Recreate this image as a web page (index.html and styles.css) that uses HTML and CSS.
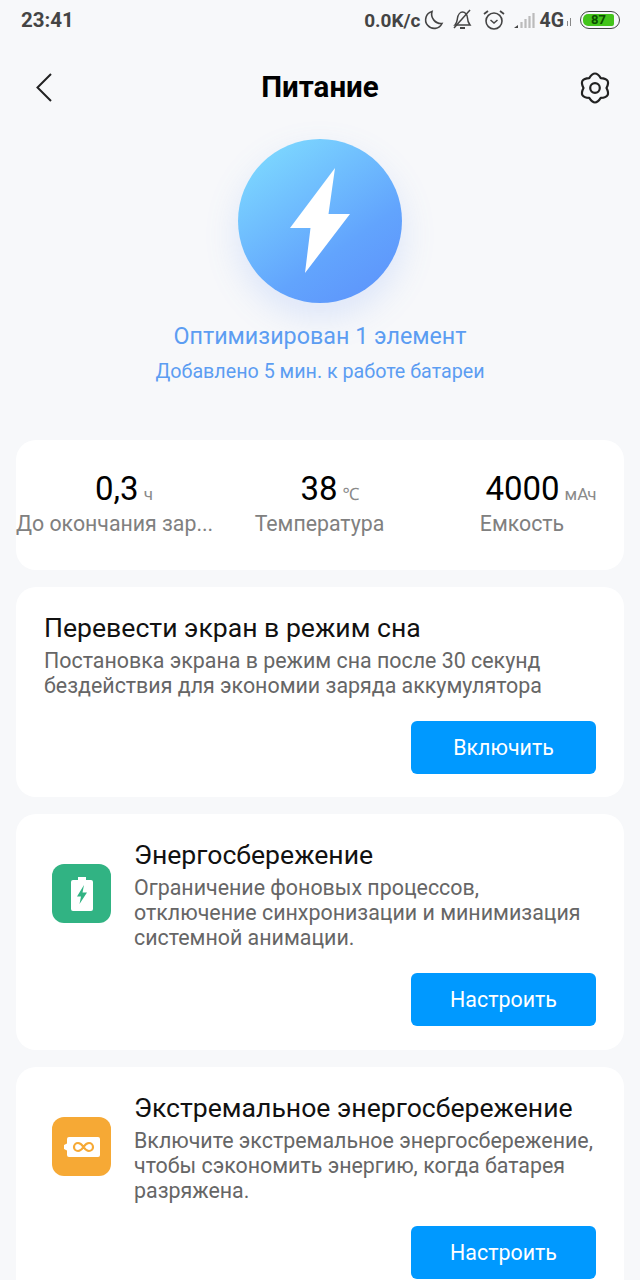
FILE: index.html
```html
<!DOCTYPE html>
<html lang="ru">
<head>
<meta charset="utf-8">
<title>Питание</title>
<link rel="stylesheet" href="styles.css">
</head>
<body>
<div class="page">
  <div class="status">
    <span class="clock">23:41</span>
    <div class="status-right">
      <span class="speed">0.0K/с</span>
      <svg class="si moon" width="22" height="22" viewBox="0 0 22 22"><path d="M10 2.500A8.600 8.600 0 1 0 20 14.500 9.500 9.500 0 0 1 10 2.500Z" fill="none" stroke="#444" stroke-width="1.600"/></svg>
      <svg class="si bell" width="22" height="24" viewBox="0 0 22 24"><path d="M4 17c2-2 2-4 2.500-7S9 4 11.500 4s5 2.500 5 6 1 5 2.500 7H4Z" fill="none" stroke="#444" stroke-width="1.500"/><path d="M9 20h5" stroke="#444" stroke-width="2"/><path d="M3 20 19 2" stroke="#444" stroke-width="1.500"/></svg>
      <svg class="si alarm" width="24" height="24" viewBox="0 0 24 24"><circle cx="12" cy="13" r="8" fill="none" stroke="#444" stroke-width="1.600"/><path d="M8.500 12l3.500 3 3.500-3" fill="none" stroke="#444" stroke-width="1.500"/><path d="M2 6l4-3M22 6l-4-3" stroke="#444" stroke-width="1.800"/></svg>
      <svg class="si signal" width="26" height="20" viewBox="0 0 26 20"><path d="M1 18l4-3v3Z" fill="#444"/><path d="M8.500 18v-6M12.500 18V9M16.500 18V6M20.500 18V3" stroke="#bbb" stroke-width="2.200"/></svg>
      <span class="net">4G</span>
      <svg class="si arrows" width="6" height="10" viewBox="0 0 6 10"><path d="M1.500 9V4M4.500 9V1" stroke="#888" stroke-width="1"/></svg>
      <span class="battery"><span class="battery-fill">87</span></span>
    </div>
  </div>

  <header class="topbar">
    <svg class="back" width="20" height="32" viewBox="0 0 20 32"><path d="M16 2 2.500 15.500 16 29" fill="none" stroke="#222" stroke-width="2"/></svg>
    <h1 class="title">Питание</h1>
    <svg class="gear" width="32" height="32" viewBox="0 0 32 32"><path d="M10.250 6.040Q16-3 21.750 6.040 32.450 6.500 27.500 16 32.450 25.500 21.750 25.960 16 35 10.250 25.960-.45 25.500 4.500 16-.45 6.500 10.250 6.040Z" fill="none" stroke="#222" stroke-width="2.200" stroke-linejoin="round"/><circle cx="16" cy="16" r="4.800" fill="none" stroke="#222" stroke-width="2.200"/></svg>
  </header>

  <section class="hero">
    <div class="orb">
      <svg width="60" height="106" viewBox="0 0 60 106"><path d="M45 0 0 60h20.500L15 105 60 46H38.500Z" fill="#fff"/></svg>
    </div>
    <p class="hero-main">Оптимизирован 1 элемент</p>
    <p class="hero-sub">Добавлено 5 мин. к работе батареи</p>
  </section>

  <section class="card stats">
    <div class="stat">
      <div class="stat-value"><span class="num">0,3</span><span class="unit">ч</span></div>
      <div class="stat-label">До окончания зар...</div>
    </div>
    <div class="stat">
      <div class="stat-value"><span class="num">38</span><span class="unit">℃</span></div>
      <div class="stat-label">Температура</div>
    </div>
    <div class="stat">
      <div class="stat-value"><span class="num">4000</span><span class="unit">мАч</span></div>
      <div class="stat-label">Емкость</div>
    </div>
  </section>

  <section class="card feature first">
    <div class="feature-text">
      <h2 class="feature-title">Перевести экран в режим сна</h2>
      <p class="feature-desc">Постановка экрана в режим сна после 30 секунд бездействия для экономии заряда аккумулятора</p>
    </div>
    <div class="actions"><button class="btn">Включить</button></div>
  </section>

  <section class="card feature with-icon">
    <div class="feature-row">
      <div class="app-icon green">
        <svg width="22" height="34" viewBox="0 0 22 34"><path d="M7 0h8v3h5a2 2 0 0 1 2 2v27a2 2 0 0 1-2 2H2a2 2 0 0 1-2-2V5a2 2 0 0 1 2-2h5Z" fill="#fff"/><path d="M13 8 6 19.500h4L8.500 27 16 15.500h-4.500Z" fill="#31b383"/></svg>
      </div>
      <div class="feature-text">
        <h2 class="feature-title">Энергосбережение</h2>
        <p class="feature-desc">Ограничение фоновых процессов, отключение синхронизации и минимизация системной анимации.</p>
      </div>
    </div>
    <div class="actions"><button class="btn">Настроить</button></div>
  </section>

  <section class="card feature with-icon">
    <div class="feature-row">
      <div class="app-icon orange">
        <svg width="36" height="20" viewBox="0 0 36 20"><path d="M5 0h29a2 2 0 0 1 2 2v16a2 2 0 0 1-2 2H5a2 2 0 0 1-2-2v-4.500L0 12V8l3-1.500V2a2 2 0 0 1 2-2Z" fill="#fff"/><path d="M19.500 10c-2-3-3.500-4-5.500-4a4 4 0 0 0 0 8c2 0 3.500-1 5.500-4s3.500-4 5.500-4a4 4 0 0 1 0 8c-2 0-3.500-1-5.500-4Z" fill="none" stroke="#f6a935" stroke-width="2.200"/></svg>
      </div>
      <div class="feature-text">
        <h2 class="feature-title">Экстремальное энергосбережение</h2>
        <p class="feature-desc">Включите экстремальное энергосбережение, чтобы сэкономить энергию, когда батарея разряжена.</p>
      </div>
    </div>
    <div class="actions"><button class="btn">Настроить</button></div>
  </section>
</div>
</body>
</html>
```
FILE: styles.css
```css
* { box-sizing: border-box; }
html, body { margin: 0; padding: 0; }
body {
  width: 640px;
  height: 1280px;
  overflow: hidden;
  background: #f7f8fa;
  font-family: Roboto, "Noto Sans", sans-serif;
}
.page { padding: 0 16px; }

.status {
  height: 40px;
  margin: 0 -16px;
  padding: 0 20px 0 21px;
  display: flex;
  align-items: center;
  justify-content: space-between;
  color: #444;
  font-weight: 700;
}
.clock { font-size: 20.500px; }
.status-right { display: flex; align-items: center; }
.speed { font-size: 19px; margin-right: 1px; }
.si { display: block; flex: none; }
.moon { margin-right: 7px; }
.bell { margin-right: 9px; }
.alarm { margin-right: 7px; }
.signal { margin-right: 1px; }
.net { font-size: 19.500px; }
.arrows { margin: 4px 8px 0 2px; }
.battery {
  display: block;
  width: 40px;
  height: 18px;
  padding: 2px;
  border: 1.500px solid #444;
  border-radius: 9px;
}
.battery-fill {
  display: block;
  width: 31px;
  height: 11.500px;
  background: #43c41a;
  border-radius: 5px 2px 2px 5px;
  color: #0c4d00;
  font-size: 13px;
  line-height: 12px;
  text-align: center;
}

.topbar {
  height: 96px;
  margin: 0 -16px;
  padding: 0 29px;
  display: grid;
  grid-template-columns: 1fr auto 1fr;
  align-items: center;
}
.back { margin-left: 6px; }
.gear { justify-self: end; }
.title {
  margin: 0;
  font-size: 29.500px;
  font-weight: 700;
  color: #000;
  line-height: 1;
}
.hero {
  padding-top: 3px;
  height: 304px;
  display: flex;
  flex-direction: column;
  align-items: center;
}
.orb {
  flex: none;
  width: 164px;
  height: 164px;
  border-radius: 50%;
  background: linear-gradient(145deg, #7fdcff 5%, #62a4fd 65%, #5c90fb 100%);
  box-shadow: 0 14px 34px rgba(92, 144, 251, 0.18);
  display: flex;
  align-items: center;
  justify-content: center;
}
.hero-main {
  margin: 19px 0 0;
  font-size: 23.300px;
  line-height: 28px;
  color: #5c9df2;
  white-space: nowrap;
}
.hero-sub {
  margin: 9px 0 0;
  font-size: 19.700px;
  line-height: 26px;
  color: #5c9df2;
  white-space: nowrap;
}

.card {
  background: #fff;
  border-radius: 20px;
  margin-bottom: 17px;
}
.stats {
  height: 130px;
  display: flex;
}
.stat { flex: none; text-align: center; }
.stat:nth-child(1) { width: 197px; }
.stat:nth-child(2) { width: 213px; }
.stat:nth-child(3) { width: 192px; }
.stat-value {
  height: 38px;
  margin-top: 30px;
  display: flex;
  justify-content: center;
  align-items: baseline;
  line-height: 38px;
}
.stat:nth-child(1) .stat-value { padding-left: 19px; }
.stat:nth-child(2) .stat-value { padding-left: 21px; }
.stat:nth-child(3) .stat-value { padding-left: 38px; }
.num { font-size: 33px; color: #000; }
.unit { font-size: 17px; color: #8a8a8a; margin-left: 5px; }
.stat-label {
  margin-top: 2px;
  font-size: 21.300px;
  line-height: 28px;
  color: #808080;
  white-space: nowrap;
}

.feature { padding: 24px 28px 24px; }
.feature.first { height: 210px; }
.with-icon { height: 236px; padding-left: 36px; }
.feature-row { display: flex; align-items: center; }
.feature-text { min-width: 0; }
.app-icon {
  flex: none;
  width: 59px;
  height: 59px;
  border-radius: 12px;
  margin-right: 23px;
  margin-top: -1px;
  display: flex;
  align-items: center;
  justify-content: center;
}
.green { background: #31b383; }
.orange { background: #f6a935; }
.feature-title {
  margin: 0;
  font-size: 26.600px;
  font-weight: 400;
  line-height: 34px;
  color: #111;
  white-space: nowrap;
}
.feature-desc {
  margin: 3px 0 0;
  font-size: 21.400px;
  line-height: 25px;
  color: #666;
}
.actions {
  display: flex;
  justify-content: flex-end;
  margin-top: 23px;
}
.btn {
  width: 185px;
  height: 53px;
  border: 0;
  border-radius: 6px;
  background: #0099ff;
  color: #fff;
  font-family: inherit;
  font-size: 21.400px;
}
```
